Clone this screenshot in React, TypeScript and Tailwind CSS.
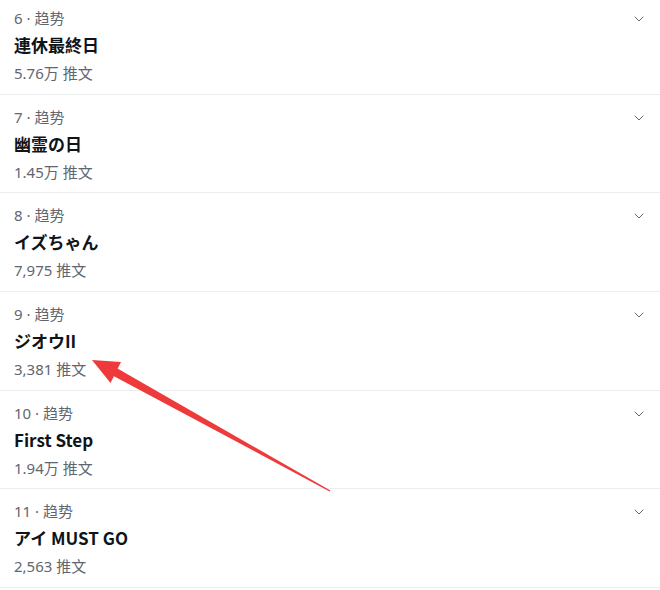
import { ChevronDown } from "lucide-react";

interface Trend {
  rank: number;
  name: string;
  count: string;
}

const trends: Trend[] = [
  { rank: 6, name: "連休最終日", count: "5.76万 推文" },
  { rank: 7, name: "幽霊の日", count: "1.45万 推文" },
  { rank: 8, name: "イズちゃん", count: "7,975 推文" },
  { rank: 9, name: "ジオウII", count: "3,381 推文" },
  { rank: 10, name: "First Step", count: "1.94万 推文" },
  { rank: 11, name: "アイ MUST GO", count: "2,563 推文" },
];

const font = {
  fontFamily: '"Noto Sans", "Noto Sans CJK SC", sans-serif',
};

function TrendRow({ trend }: { trend: Trend }) {
  return (
    <div className="relative h-[98.67px] border-b border-[#ebeef0] px-[14px] pt-[12px] box-border">
      <div className="text-[15px] leading-[20px] text-[#5f6670]">{trend.rank} · 趋势</div>
      <div className="mt-[5px] text-[17px] leading-[24px] font-bold text-[#0f1419] font-['Noto_Sans_CJK_SC',sans-serif]">
        {trend.name}
      </div>
      <div className="mt-[6px] text-[15px] leading-[20px] text-[#5f6670]">{trend.count}</div>
      <ChevronDown
        className="absolute right-[13px] top-[15px] text-[#5f6670]"
        size={16}
        strokeWidth={1.5}
      />
    </div>
  );
}

export default function App() {
  return (
    <div className="relative w-[660px] h-[590px] overflow-hidden bg-white" style={font}>
      <div className="-mt-[4px]">
        {trends.map((t) => (
          <TrendRow key={t.rank} trend={t} />
        ))}
      </div>

      {/* red arrow pointing at ジオウII */}
      <svg className="absolute left-0 top-0" width={660} height={590} viewBox="0 0 660 590">
        <polygon points="117,368.3 113,375.7 329.6,491.4 330.4,490.6" fill="#ee3a3a" />
        <polygon points="92,360 121,362 110.5,383" fill="#ee3a3a" />
      </svg>
    </div>
  );
}
